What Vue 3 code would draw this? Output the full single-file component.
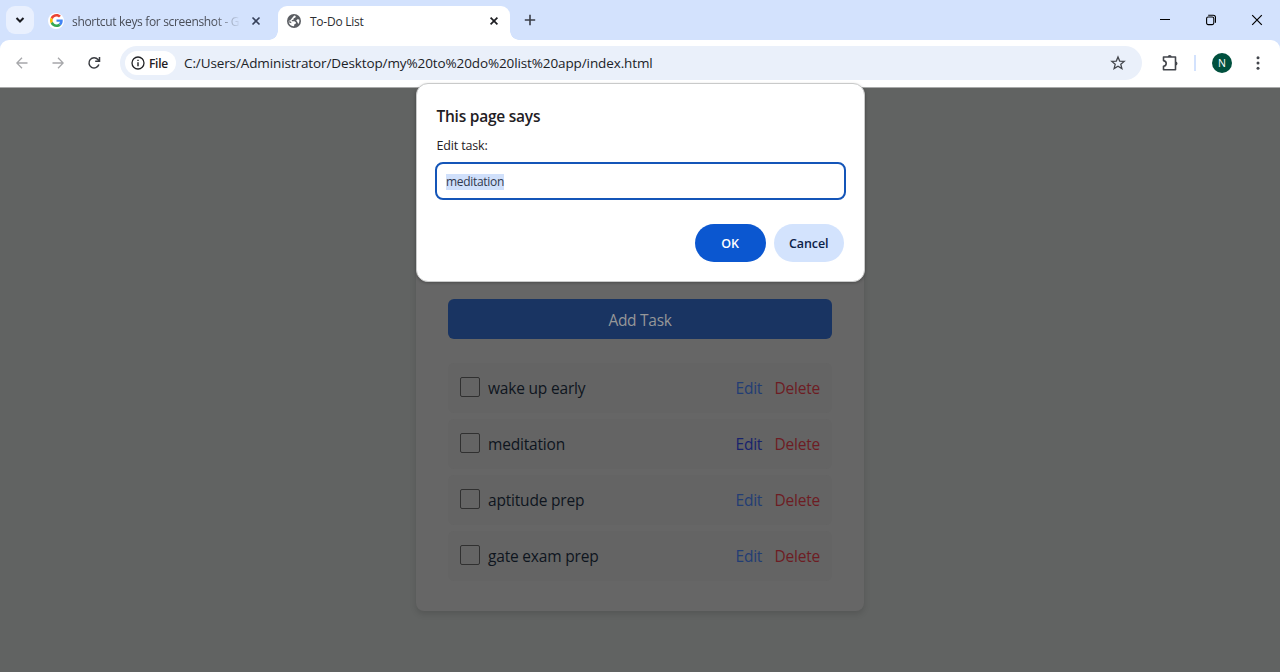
<script setup>
const tasks = [
  { name: 'wake up early' },
  { name: 'meditation', active: true },
  { name: 'aptitude prep' },
  { name: 'gate exam prep' },
]
</script>

<template>
  <div class="window">
    <header class="tabs">
      <button class="search-tabs">
        <svg width="10" height="8" viewBox="0 0 10 8"><path d="M1.500 2 5 5.500 8.500 2" fill="none" stroke="#1b1c22" stroke-width="2" /></svg>
      </button>
      <div class="tab inactive">
        <span class="favicon">
          <svg width="13" height="13" viewBox="0 0 48 48">
            <path fill="#EA4335" d="M24 9.500c3.540 0 6.710 1.220 9.210 3.600l6.850-6.850C35.900 2.380 30.470 0 24 0 14.620 0 6.510 5.380 2.560 13.220l7.980 6.190C12.430 13.720 17.740 9.500 24 9.500z" />
            <path fill="#4285F4" d="M46.980 24.550c0-1.570-.15-3.090-.38-4.550H24v9.020h12.940c-.58 2.960-2.260 5.480-4.780 7.180l7.730 6c4.510-4.180 7.090-10.360 7.090-17.650z" />
            <path fill="#FBBC05" d="M10.530 28.590c-.48-1.450-.76-2.990-.76-4.590s.27-3.140.76-4.590l-7.980-6.190C.92 16.460 0 20.120 0 24s.92 7.540 2.560 10.780l7.970-6.190z" />
            <path fill="#34A853" d="M24 48c6.480 0 11.930-2.130 15.890-5.810l-7.730-6c-2.150 1.450-4.920 2.300-8.160 2.300-6.260 0-11.570-4.220-13.470-9.910l-7.980 6.190C6.510 42.620 14.620 48 24 48z" />
          </svg>
        </span>
        <span class="tab-title fade">shortcut keys for screenshot - G</span>
        <svg class="close" width="10" height="10" viewBox="0 0 10 10"><path d="M1.500 1.500 8.500 8.500M8.500 1.500 1.500 8.500" stroke="#36405a" stroke-width="1.600" /></svg>
      </div>
      <div class="tab current">
        <svg class="globe" width="14" height="14" viewBox="0 0 14 14">
          <circle cx="7" cy="7" r="7" fill="#5b5e63" />
          <path d="M7.200 1.600 8.800 1.900 8.400 3.600 6.700 4.300 6.600 5.600 4.700 6.300 4.700 7.200 7.500 7.200 9 8.400 8.700 9.700 7.400 10.200 7 12.200C4.600 12.200 2.300 10.600 1.700 8.200L4.200 9.200 4.400 8.200 2 6.200C1.800 6.800 1.700 7.400 1.700 8.200ZM10.400 5.200 12.200 5.600C12.600 7.200 12.200 8.900 11.300 10L10.200 7.700 9.200 6.500Z" fill="#fff" />
        </svg>
        <span class="tab-title current-title">To-Do List</span>
        <svg class="close" width="10" height="10" viewBox="0 0 10 10"><path d="M1.600 1.600 8.400 8.400M8.400 1.600 1.600 8.400" stroke="#1d1e22" stroke-width="1.700" /></svg>
      </div>
      <svg class="plus" width="12" height="12" viewBox="0 0 12 12"><path d="M6 .8V11.200M.8 6H11.200" stroke="#3a3e48" stroke-width="1.600" /></svg>
      <div class="controls">
        <svg width="10" height="12" viewBox="0 0 10 12"><path d="M0 5.500H10" stroke="#000" /></svg>
        <svg width="10" height="12" viewBox="0 0 10 12"><rect x=".6" y="3" width="7.200" height="7.600" rx="1.500" fill="none" stroke="#000" stroke-width="1.100" /><path d="M2.200 1.300H7.300Q9.500 1.300 9.500 3.500V8.800" fill="none" stroke="#000" stroke-width="1.100" /></svg>
        <svg width="12" height="12" viewBox="0 0 12 12"><path d="M1.200 1.200 10.800 10.800M10.800 1.200 1.200 10.800" stroke="#000" stroke-width="1.200" /></svg>
      </div>
    </header>

    <nav class="toolbar">
      <svg class="back" width="12" height="12" viewBox="0 0 12 12"><path d="M11.500 6H1M6 .8.8 6 6 11.200" fill="none" stroke="#a6a7aa" stroke-width="1.300" /></svg>
      <svg class="forward" width="12" height="12" viewBox="0 0 12 12"><path d="M.5 6H11M6 .8 11.200 6 6 11.200" fill="none" stroke="#a6a7aa" stroke-width="1.300" /></svg>
      <svg class="reload" width="14" height="14" viewBox="0 0 14 14"><path d="M11.900 8.600A5.100 5.100 0 1 1 11 3.600L12.300 5M12.500 1V5.300H8.200" fill="none" stroke="#393b40" stroke-width="1.500" /></svg>
      <div class="address">
        <span class="file-chip">
          <svg width="14" height="14" viewBox="0 0 14 14"><circle cx="7" cy="7" r="6" fill="none" stroke="#222326" stroke-width="1.300" /><path d="M7 6.300V10.200M7 3.700V5.100" stroke="#222326" stroke-width="1.400" /></svg>
          <span class="file-label">File</span>
        </span>
        <span class="url">C:/Users/Administrator/Desktop/my%20to%20do%20list%20app/index.html</span>
        <svg class="star" width="16" height="16" viewBox="0 0 16 16"><path d="M8 2 9.700 6.100 14.200 6.400 10.800 9.300 11.900 13.600 8 11.200 4.100 13.600 5.200 9.300 1.800 6.400 6.300 6.100Z" fill="none" stroke="#43464c" stroke-width="1.300" /></svg>
      </div>
      <svg class="puzzle" width="18" height="18" viewBox="0 0 18 18"><path d="M2.500 3H14.500V15.700H2.500V12.200Q5.200 11.700 5.200 9.400T2.500 6.600Z" fill="none" stroke="#43464c" stroke-width="1.600" stroke-linejoin="round" /><path d="M6.700 3A2 2 0 0 1 10.700 3ZM14.500 7.400A2 2 0 0 1 14.500 11.400Z" fill="#43464c" /></svg>
      <span class="divider"></span>
      <span class="avatar">N</span>
      <svg class="more" width="4" height="14" viewBox="0 0 4 14"><circle cx="2" cy="1.800" r="1.500" fill="#43464c" /><circle cx="2" cy="7" r="1.500" fill="#43464c" /><circle cx="2" cy="12.200" r="1.500" fill="#43464c" /></svg>
    </nav>

    <main class="page">
      <section class="card">
        <button class="add">Add Task</button>
        <ul>
          <li v-for="t in tasks" :key="t.name">
            <span class="check"></span>
            <span class="name">{{ t.name }}</span>
            <span class="edit" :class="{ active: t.active }">Edit</span>
            <span class="delete">Delete</span>
          </li>
        </ul>
      </section>
    </main>

    <div class="dialog">
      <h1>This page says</h1>
      <p>Edit task:</p>
      <div class="field"><span>meditation</span></div>
      <div class="actions">
        <button class="ok">OK</button>
        <button class="cancel">Cancel</button>
      </div>
    </div>
  </div>
</template>

<style>
html, body { margin: 0; overflow: hidden; }
</style>

<style scoped>
* { box-sizing: border-box; }
.window { position: relative; width: 1280px; height: 672px; overflow: hidden; display: flex; flex-direction: column; background: #d3e2fd; font-family: "Open Sans", "Noto Sans", sans-serif; color: #1f2024; white-space: nowrap; }
button { border: 0; padding: 0; margin: 0; font: inherit; }
svg { display: block; flex: none; }

.tabs { height: 40px; flex: none; display: flex; }
.search-tabs { width: 28px; height: 28px; margin: 6px 0 0 6px; border-radius: 9px; background: #e9f0fe; display: flex; align-items: center; justify-content: center; }
.tab { height: 34px; margin-top: 6px; display: flex; align-items: center; padding-bottom: 5px; }
.inactive { width: 244px; padding-left: 14px; }
.favicon { width: 16px; height: 16px; border-radius: 50%; background: #fff; display: flex; align-items: center; justify-content: center; }
.tab-title { font-size: 12px; line-height: 18px; padding-top: 2px; color: #4a4e58; letter-spacing: -0.24px; }
.fade { width: 172px; margin-left: 8px; letter-spacing: -0.33px; -webkit-mask-image: linear-gradient(90deg, #000 142px, transparent 169px); mask-image: linear-gradient(90deg, #000 142px, transparent 169px); }
.inactive .close { margin-left: 7px; }
.current { position: relative; width: 232px; background: #fff; border-radius: 9px 9px 0 0; padding-left: 9px; }
.current::before, .current::after { content: ""; position: absolute; bottom: 0; width: 9px; height: 9px; }
.current::before { left: -9px; background: radial-gradient(circle at 0 0, transparent 8.500px, #fff 9px); }
.current::after { right: -9px; background: radial-gradient(circle at 100% 0, transparent 8.500px, #fff 9px); }
.current-title { width: 170px; margin-left: 9px; color: #2c2d31; }
.current .close { margin-left: 9px; }
.plus { margin: 14px 0 0 14px; }
.controls { margin: 14px 17px 0 auto; display: flex; gap: 36px; }
.controls svg:nth-child(2) { margin-right: -1px; }

.toolbar { height: 48px; flex: none; display: flex; align-items: center; background: #fff; border-radius: 9px 9px 0 0; border-bottom: 1px solid #a9aaaa; padding-bottom: 1px; }
.back { margin-left: 16px; }
.forward { margin-left: 24px; }
.reload { margin-left: 23px; }
.address { width: 1022px; height: 34px; margin-left: 19px; border-radius: 17px; background: #eaf0fa; display: flex; align-items: center; padding-left: 5px; }
.file-chip { width: 51px; height: 24px; border-radius: 12px; background: #fff; display: flex; align-items: center; padding-left: 6px; }
.file-label { margin-left: 4px; font-size: 12px; font-weight: 600; letter-spacing: -0.3px; }
.url { margin-left: 8px; font-size: 13.500px; letter-spacing: -0.11px; color: #202226; width: 920px; }
.star { margin-left: 6px; }
.puzzle { margin-left: 19px; }
.divider { width: 2px; height: 16px; background: #d3e2fd; margin-left: 15px; }
.avatar { width: 20px; height: 20px; border-radius: 50%; background: #00503e; color: #fff; font-size: 10.500px; display: flex; align-items: center; justify-content: center; margin-left: 16px; }
.more { margin-left: 24px; }

.page { flex: 1; display: flex; justify-content: center; background: #616362; }
.card { width: 448px; height: 523px; padding: 211px 32px 0; background: #666; border-radius: 0 0 8px 8px; box-shadow: 0 3px 6px rgba(0, 0, 0, .13); }
.add { width: 384px; height: 40px; padding-top: 2px; border-radius: 6px; background: #193462; color: #969798; font-size: 15.500px; letter-spacing: -0.28px; display: flex; align-items: center; justify-content: center; }
ul { list-style: none; margin: 24px 0 0; padding: 0; display: flex; flex-direction: column; gap: 6px; }
li { height: 50px; border-radius: 6px; background: #646464; display: flex; align-items: center; padding: 0 11.500px 0 12px; font-size: 15.500px; letter-spacing: -0.22px; }
.check { width: 20px; height: 20px; border: 1px solid #303030; border-radius: 2px; margin-top: -2px; }
.name { margin-left: 8px; flex: 1; color: #0e151e; letter-spacing: -0.19px; }
.edit { color: #223d74; width: 27px; }
.edit.active { color: #18236c; }
.delete { color: #6d1c23; width: 46px; margin-left: 12px; }

.dialog { position: absolute; left: 416px; top: 83px; width: 449px; height: 199px; padding: 20px 20px 19px 19px; background: #fff; border: 1px solid #c9caca; border-radius: 12px; box-shadow: 0 1px 3px rgba(0, 0, 0, .25); display: flex; flex-direction: column; }
h1 { margin: 0 0 0 .5px; font-size: 15.500px; line-height: 24px; font-weight: 600; letter-spacing: -0.24px; }
p { margin: 9px 0 0 .5px; font-size: 12.500px; line-height: 18px; letter-spacing: -0.15px; }
.field { width: 410.500px; height: 38px; margin: 7px 0 0 -1px; border: 2px solid #1455b8; border-radius: 8px; padding: 2px 0 0 9px; display: flex; align-items: center; font-size: 12px; letter-spacing: -0.3px; }
.field span { background: #d0e0fb; color: #30394d; line-height: 16px; margin-top: -1px; }
.actions { display: flex; justify-content: flex-end; gap: 8px; margin: 23.500px 0 0; }
.actions button { height: 38px; border-radius: 19px; font-size: 12.500px; font-weight: 600; letter-spacing: -0.1px; padding-top: 1px; }
.ok { width: 71px; background: #0b57d0; color: #fff; }
.cancel { width: 70.500px; background: #d3e3fd; color: #0b2249; }
</style>
